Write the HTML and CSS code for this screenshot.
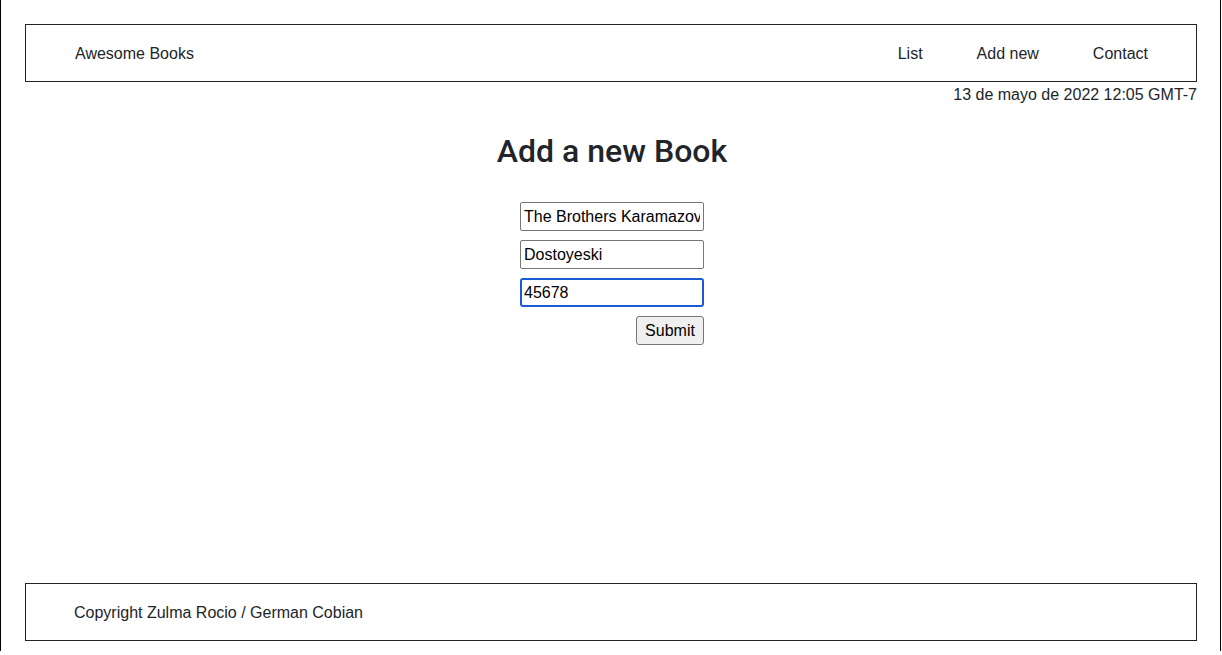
FILE: index.html
```html
<!DOCTYPE html>
<html lang="en">
<head>
<meta charset="utf-8">
<title>Awesome Books</title>
<link rel="stylesheet" href="styles.css">
</head>
<body>
<div class="frame">
  <header class="topbar">
    <span class="brand">Awesome Books</span>
    <nav class="nav">
      <a href="#" class="nav-link">List</a>
      <a href="#" class="nav-link">Add new</a>
      <a href="#" class="nav-link">Contact</a>
    </nav>
  </header>
  <div class="date">13 de mayo de 2022 12:05 GMT-7</div>
  <main class="main">
    <h2 class="title">Add a new Book</h2>
    <form class="book-form">
      <input class="field" type="text" value="The Brothers Karamazov">
      <input class="field" type="text" value="Dostoyeski">
      <input class="field field-focus" type="text" value="45678">
      <button class="submit" type="button">Submit</button>
    </form>
  </main>
  <footer class="footer">Copyright Zulma Rocio / German Cobian</footer>
</div>
</body>
</html>
```

FILE: styles.css
```css
* { box-sizing: border-box; }
html, body { margin: 0; padding: 0; background: #fff; }
body {
  font-family: "Liberation Sans", Arial, sans-serif;
  font-size: 16px;
  color: #212529;
}
.frame {
  width: 1221px;
  height: 651px;
  border-left: 1px solid #000;
  border-right: 1px solid #000;
  padding: 24px 23px 10px 24px;
  display: flex;
  flex-direction: column;
}
.topbar {
  height: 58px;
  border: 1px solid #212529;
  display: flex;
  align-items: center;
  justify-content: space-between;
  padding: 2px 48px 0 49px;
}
.brand { font-size: 16px; }
.nav { display: flex; gap: 54px; }
.nav-link { color: #212529; text-decoration: none; }
.date {
  text-align: right;
  line-height: 26px;
}
.main {
  flex: 1;
  display: flex;
  flex-direction: column;
  align-items: center;
  padding-left: 2px;
}
.title {
  margin: 24px 0 0;
  font-family: Roboto, "Liberation Sans", Arial, sans-serif;
  font-size: 32px;
  font-weight: 500;
  line-height: 38px;
}
.book-form {
  margin-top: 32px;
  width: 184px;
  display: flex;
  flex-direction: column;
  align-items: flex-end;
  gap: 9px;
}
.field {
  width: 184px;
  height: 29px;
  border: 1px solid #767676;
  border-radius: 2px;
  padding: 0 3px;
  font-family: "Liberation Sans", Arial, sans-serif;
  font-size: 16px;
  color: #000;
  background: #fff;
}
.field-focus {
  border: 2px solid #1a5bd2;
  border-radius: 3px;
  padding: 0 2px;
  outline: none;
}
.submit {
  width: 68px;
  height: 29px;
  border: 1px solid #767676;
  border-radius: 3px;
  background: #efefef;
  font-family: "Liberation Sans", Arial, sans-serif;
  font-size: 16px;
  color: #000;
  padding: 0;
}
.footer {
  height: 58px;
  border: 1px solid #212529;
  display: flex;
  align-items: center;
  padding: 2px 0 0 48px;
}
```
